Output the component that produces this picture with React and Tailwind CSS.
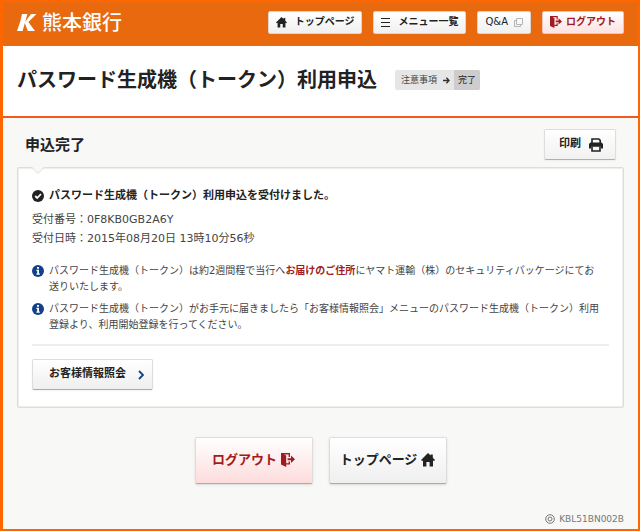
function HomeIcon({ className }){
    return (
        <svg viewBox="0 0 14 14" className={className} fill="currentColor" aria-hidden="true">
            <path d="M7 0 L9.6 2.6 V1.4 H11.8 V4.8 L14 7 L13 8 L12 7.4 V13.4 H8.6 V9 H5.4 V13.4 H2 V7.4 L1 8 L0 7 Z"/>
        </svg>
    )
}

function LogoutIcon({ className }){
    return (
        <svg viewBox="0 0 14 14" className={className} fill="currentColor" aria-hidden="true">
            <path d="M0 0 H9 V4 H7.6 V1.4 H3 L5.2 2.6 V14 L0 11.6 Z"/>
            <path d="M7.6 8.6 H9 V11.6 H5 V10.2 H7.6 Z"/>
            <path d="M6.6 5.3 H10 V2.6 L14 6.3 L10 10 V7.3 H6.6 Z"/>
        </svg>
    )
}

function PrintIcon({ className }){
    return (
        <svg viewBox="0 0 14 14" className={className} aria-hidden="true">
            <path d="M3 5 V1 H9.8 L11.2 2.4 V5" fill="none" stroke="currentColor" strokeWidth="1.6"/>
            <path d="M1.4 4.6 H12.6 L14 6 V10.6 H12 V8.8 H2 V10.6 H0 V6 Z" fill="currentColor"/>
            <path d="M3 8.6 V13 H11 V8.6" fill="none" stroke="currentColor" strokeWidth="1.6"/>
        </svg>
    )
}

function InfoIcon(){
    return (
        <svg viewBox="0 0 12 12" className="mt-0.5 h-3 w-3 shrink-0" aria-hidden="true">
            <circle cx="6" cy="6" r="6" fill="#12408a"/>
            <path d="M5 2 H7 V3.7 H5 Z M4.4 4.8 H7 V8.4 H7.8 V9.8 H4.4 V8.4 H5.2 V6 H4.4 Z" fill="#fff"/>
        </svg>
    )
}

function CheckIcon(){
    return (
        <svg viewBox="0 0 12 12" className="h-3 w-3 shrink-0" aria-hidden="true">
            <circle cx="6" cy="6" r="6" fill="#222"/>
            <path d="M3.2 6 L5.2 8 L9 4" fill="none" stroke="#fff" strokeWidth="1.8"/>
        </svg>
    )
}

export default function App(){
    return (
        <div className="flex min-h-screen flex-col border-2 border-l-3 border-[#ff6600] bg-[#f8f8f7] font-['DejaVu_Sans','Noto_Sans_CJK_JP',sans-serif] text-[#444]">
            <header className="flex h-11 items-center justify-between bg-[#e9690f] px-3.5 pb-1">
                <a href="#" className="flex items-center gap-1.5 text-white">
                    <svg viewBox="0 0 19 17" className="h-[17px] w-[19px]" fill="currentColor" aria-hidden="true">
                        <path d="M5 0 H10.4 L5.6 17 H0 L3.4 7 Z"/>
                        <path d="M14 0 H19.4 L11.4 8 L18 17 H10.8 L7.6 8.4 Z"/>
                    </svg>
                    <span className="font-['Noto_Sans_CJK_JP',sans-serif] text-xl leading-6 font-medium">熊本銀行</span>
                </a>
                <nav className="flex gap-[11px] text-[10px] leading-4 font-bold whitespace-nowrap text-[#222]">
                    <button className="flex h-[23px] items-center gap-2 rounded-xs border border-[#e0d5cd] bg-linear-to-b from-white to-[#f0f0f0] px-[7px]">
                        <HomeIcon className="h-[11px] w-[11px]"/>
                        トップページ
                    </button>
                    <button className="flex h-[23px] items-center gap-2 rounded-xs border border-[#e0d5cd] bg-linear-to-b from-white to-[#f0f0f0] px-[7px]">
                        <svg viewBox="0 0 9 9" className="h-[9px] w-[9px]" fill="currentColor" aria-hidden="true">
                            <path d="M0 0 H9 V1 H0 Z M0 4 H9 V5 H0 Z M0 8 H9 V9 H0 Z"/>
                        </svg>
                        メニュー一覧
                    </button>
                    <button className="flex h-[23px] items-center gap-1.5 rounded-xs border border-[#e0d5cd] bg-linear-to-b from-white to-[#f0f0f0] px-[7px] font-normal">
                        Q&amp;A
                        <svg viewBox="0 0 9 9" className="h-[9px] w-[9px]" fill="none" stroke="#b5b5b5" aria-hidden="true">
                            <path d="M2.5 0.5 H8.5 V6.5 H2.5 Z M2.5 2.5 H0.5 V8.5 H6.5 V6.5"/>
                        </svg>
                    </button>
                    <button className="flex h-[23px] items-center gap-1 rounded-xs border border-[#f0c4b4] bg-linear-to-b from-white to-[#fde2e2] px-[7px] text-[#a01c20]">
                        <LogoutIcon className="h-3 w-3"/>
                        ログアウト
                    </button>
                </nav>
            </header>

            <div className="flex h-[72px] items-center gap-[18px] border-b-2 border-[#f15a1c] bg-white px-3.5 pb-0.5">
                <h1 className="text-xl leading-7 font-bold whitespace-nowrap text-[#222]">パスワード生成機（トークン）利用申込</h1>
                <ol className="flex overflow-hidden rounded-xs bg-[#e6e6e6] text-[9px] leading-5 whitespace-nowrap">
                    <li className="flex items-center gap-1.5 pr-1 pl-1.5">
                        注意事項
                        <svg viewBox="0 0 7 7" className="h-[7px] w-[7px]" fill="none" stroke="#333" strokeWidth="1.4" aria-hidden="true">
                            <path d="M0 3.5 H6 M3.4 0.8 L6 3.5 L3.4 6.2"/>
                        </svg>
                    </li>
                    <li className="bg-[#cdcdcd] px-1 text-[#222]">完了</li>
                </ol>
            </div>

            <main className="px-3.5">
                <div className="flex items-center justify-between px-2 pt-[11px] pb-[7px]">
                    <h2 className="text-[15px] leading-6 font-bold text-[#222]">申込完了</h2>
                    <button className="flex h-[31px] items-center gap-2 rounded-xs border border-[#ddd] border-b-[#aab0b4] bg-linear-to-b from-white to-[#f1f1f1] px-3 text-[11px] font-bold text-[#222] shadow-xs">
                        <span className="pl-0.5">印刷</span>
                        <PrintIcon className="h-3.5 w-3.5"/>
                    </button>
                </div>

                <section className="relative rounded-xs border border-[#ddd] bg-white px-3.5 pt-[18px] pb-[17px] ring-1 ring-[#eee] ring-inset">
                    {/* notch under the section title */}
                    <svg viewBox="0 0 12 8" className="absolute -top-px left-3.5 h-2 w-3" aria-hidden="true">
                        <path d="M0 0 H12 L6 6 Z" fill="#f8f8f7"/>
                        <path d="M0 0.5 L6 6.5 L12 0.5" fill="none" stroke="#ddd"/>
                    </svg>

                    <h3 className="flex items-center gap-[5px] text-[11px] leading-5 font-bold text-[#222]">
                        <CheckIcon/>
                        パスワード生成機（トークン）利用申込を受付けました。
                    </h3>
                    <div className="mt-1 text-[11px] leading-[19px]">
                        <p>受付番号：0F8KB0GB2A6Y</p>
                        <p>受付日時：2015年08月20日 13時10分56秒</p>
                    </div>

                    <ul className="mt-[15px] space-y-1.5 pr-2 text-[10px] leading-4">
                        <li className="flex gap-[5px]">
                            <InfoIcon/>
                            <p>パスワード生成機（トークン）は約2週間程で当行へ<strong className="text-[#a01c20]">お届けのご住所</strong>にヤマト運輸（株）のセキュリティパッケージにてお送りいたします。</p>
                        </li>
                        <li className="flex gap-[5px]">
                            <InfoIcon/>
                            <p>パスワード生成機（トークン）がお手元に届きましたら「お客様情報照会」メニューのパスワード生成機（トークン）利用登録より、利用開始登録を行ってください。</p>
                        </li>
                    </ul>

                    <hr className="mt-[11px] border-t-2 border-[#eee]"/>

                    <button className="mt-[13px] flex h-[31px] items-center gap-3 rounded-xs border border-[#ddd] border-b-[#aaa] bg-linear-to-b from-white to-[#efefef] pr-2 pl-4 text-[11px] font-bold text-[#222] shadow-xs">
                        お客様情報照会
                        <svg viewBox="0 0 6 10" className="h-2.5 w-1.5" fill="none" stroke="#12408a" strokeWidth="1.8" aria-hidden="true">
                            <path d="M1 1 L5 5 L1 9"/>
                        </svg>
                    </button>
                </section>

                <div className="mt-[29px] flex justify-center gap-4 text-[13px] font-bold">
                    <button className="flex h-[47px] w-[118px] items-center justify-center gap-1 rounded-xs border border-[#ddd] border-b-[#b9a5a5] bg-linear-to-b from-white to-[#fddcdc] pb-0.5 text-[#a01c20] shadow-sm">
                        ログアウト
                        <LogoutIcon className="h-3.5 w-3.5"/>
                    </button>
                    <button className="flex h-[47px] w-[118px] items-center justify-center gap-1 rounded-xs border border-[#ddd] border-b-[#aaa] bg-linear-to-b from-white to-[#efefef] pb-0.5 text-[#222] shadow-sm">
                        トップページ
                        <HomeIcon className="h-3.5 w-3.5"/>
                    </button>
                </div>
            </main>

            <footer className="mt-auto flex items-center justify-end gap-1 px-3.5 pb-0.5 text-[9px] leading-4 text-[#777]">
                <svg viewBox="0 0 10 10" className="h-2.5 w-2.5" fill="none" stroke="#777" aria-hidden="true">
                    <circle cx="5" cy="5" r="4.3"/>
                    <circle cx="5" cy="5" r="2"/>
                </svg>
                KBL51BN002B
            </footer>
        </div>
    )
}
